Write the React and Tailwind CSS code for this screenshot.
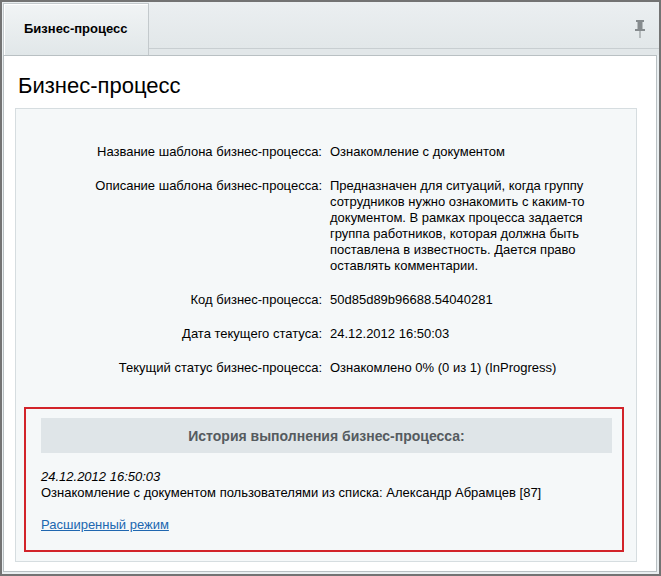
import React from 'react';

const rows = [
  { label: 'Название шаблона бизнес-процесса:', value: 'Ознакомление с документом' },
  {
    label: 'Описание шаблона бизнес-процесса:',
    value:
      'Предназначен для ситуаций, когда группу сотрудников нужно ознакомить с каким-то документом. В рамках процесса задается группа работников, которая должна быть поставлена в известность. Дается право оставлять комментарии.',
  },
  { label: 'Код бизнес-процесса:', value: '50d85d89b96688.54040281' },
  { label: 'Дата текущего статуса:', value: '24.12.2012 16:50:03' },
  { label: 'Текущий статус бизнес-процесса:', value: 'Ознакомлено 0% (0 из 1) (InProgress)' },
];

const PinIcon = () => (
  <svg width="12" height="18" viewBox="0 0 12 18" fill="#868b8e">
    <rect x="2" y="0" width="8" height="2" />
    <rect x="3.5" y="2" width="5" height="7" />
    <rect x="1" y="9" width="10" height="2" />
    <rect x="5.5" y="11" width="1" height="7" />
  </svg>
);

const App = () => {
  return (
    <div
      className="w-[661px] h-[576px] border-2 border-[#737373] bg-[#e9eef0] flex flex-col text-[13px] leading-4 text-black"
      style={{ fontFamily: '"Liberation Sans", Arial, sans-serif' }}
    >
      {/* Tabs */}
      <div className="h-[53px] flex shrink-0 pl-px">
        <div className="mt-px w-[146px] h-[52px] bg-gradient-to-b from-[#f1f4f5] to-[#e1e7e9] border border-b-0 border-[#c3c9cc] shadow-[inset_1px_1px_0_#ffffff] flex items-start pt-[17px] pl-5 font-bold">
          Бизнес-процесс
        </div>
        <div className="flex-1 flex flex-col">
          <div className="h-[47px] bg-gradient-to-b from-[#ebeff1] to-[#e2e7e9] border-b border-[#c8ced1] flex items-start justify-end pt-[18px] pr-[13px]">
            <PinIcon />
          </div>
          <div className="flex-1 bg-[#e2e7e9]" />
        </div>
      </div>

      {/* Content */}
      <div className="flex-1 ml-px mr-[2px] mb-[2px] bg-white border border-[#b9c0c3] flex flex-col">
        <h1 className="pl-[14px] pt-[16px] text-[22px] leading-7 font-normal mb-[8px]">Бизнес-процесс</h1>

        <div className="ml-[11px] w-[622px] bg-[#f5f8f9] border border-[#d6dde0] pt-[26px] pb-[9px]">
          <div className="flex flex-col">
            {rows.map((row, idx) => (
              <div key={idx} className="flex py-[9px]">
                <div className="w-[310px] text-right pr-[4px] shrink-0">{row.label}</div>
                <div className="w-[290px] pl-[4px]">{row.value}</div>
              </div>
            ))}
          </div>

          {/* History */}
          <div className="mt-[22px] ml-[8px] w-[600px] border-2 border-[#d2232a] pt-[9px] pl-[15px] pr-[10px] pb-[17px]">
            <div className="h-[35px] bg-[#dfe5e8] flex items-center justify-center font-bold text-[14px] text-[#555b5f]">
              История выполнения бизнес-процесса:
            </div>
            <div className="mt-[16px] italic">24.12.2012 16:50:03</div>
            <div>Ознакомление с документом пользователями из списка: Александр Абрамцев [87]</div>
            <a href="#" className="mt-[16px] inline-block text-[#2067b0] underline">
              Расширенный режим
            </a>
          </div>
        </div>
      </div>
    </div>
  );
};

export default App;
